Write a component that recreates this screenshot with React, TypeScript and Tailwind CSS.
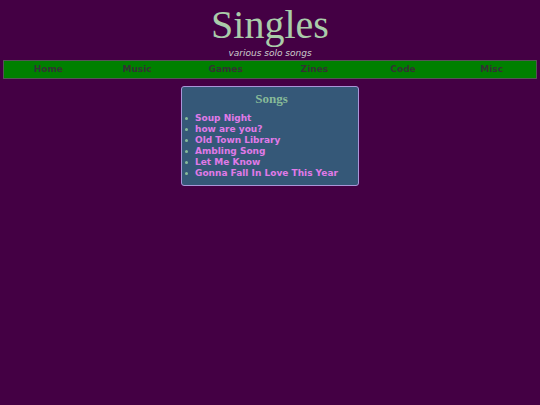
import React from 'react';

const navItems = ['Home', 'Music', 'Games', 'Zines', 'Code', 'Misc'];

const songs = [
  'Soup Night',
  'how are you?',
  'Old Town Library',
  'Ambling Song',
  'Let Me Know',
  'Gonna Fall In Love This Year',
];

export default function App() {
  return (
    <div className="min-h-[405px] w-full bg-[#440044] pt-[5px] font-['DejaVu_Sans',sans-serif]">
      <header className="flex flex-col items-center">
        <h1 className="font-['Liberation_Serif',serif] text-[40px] leading-[40px] text-[#aaccaa]">Singles</h1>
        <p className="mt-[2px] text-[9px] leading-[12px] italic text-[#cccccc]">various solo songs</p>
      </header>

      <nav className="mx-[3px] mt-[1px] flex h-[19px] items-center border border-[#555555] bg-[#008000]">
        {navItems.map((item) => (
          <a key={item} href="#" className="flex-1 text-center text-[9px] font-bold leading-[17px] text-[#333333]">
            {item}
          </a>
        ))}
      </nav>

      <div className="mx-auto mt-[7px] w-[178px] rounded-[3px] border border-[#a995d8] bg-[#355878] pb-[6px] pl-[3px] pt-[4px]">
        <h2 className="text-center font-['Liberation_Serif',serif] text-[13px] font-bold leading-[16px] text-[#88bb99]">Songs</h2>
        <ul className="mt-[6px]">
          {songs.map((song) => (
            <li key={song} className="flex items-center gap-[7px] text-[9px] font-bold leading-[11px]">
              <span className="block h-[3px] w-[3px] rounded-full bg-[#88bb99]" />
              <a href="#" className="text-[#e07ae8]">{song}</a>
            </li>
          ))}
        </ul>
      </div>
    </div>
  );
}
